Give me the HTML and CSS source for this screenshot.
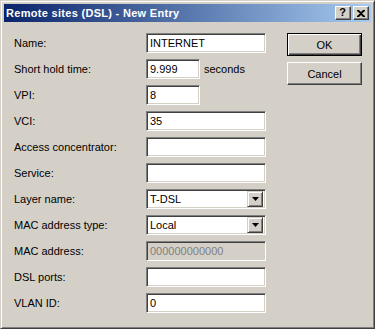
FILE: index.html
```html
<!DOCTYPE html>
<html lang="en">
<head>
  <meta charset="UTF-8">
  <title>Remote sites (DSL) - New Entry</title>
  <link rel="stylesheet" href="styles.css">
</head>
<body>

  <!-- dialog window -->
  <div class="window">
    <div class="titlebar">
      <span class="title">Remote sites (DSL) - New Entry</span>
      <div class="caption-buttons">
        <span class="caption-btn help">?</span>
        <span class="caption-btn close">
          <svg width="8" height="7" viewBox="0 0 8 7"><path d="M0 0h2l2 2 2-2h2v1L5 3.5 8 6v1H6L4 5 2 7H0V6l3-2.5L0 1z" fill="#000"/></svg>
        </span>
      </div>
    </div>

    <div class="content">
      <div class="form">
        <label>Name:</label>
        <div class="field"><input class="edit" type="text" value="INTERNET"></div>

        <label>Short hold time:</label>
        <div class="field"><input class="edit short" type="text" value="9.999"><span class="unit">seconds</span></div>

        <label>VPI:</label>
        <div class="field"><input class="edit short" type="text" value="8"></div>

        <label>VCI:</label>
        <div class="field"><input class="edit" type="text" value="35"></div>

        <label>Access concentrator:</label>
        <div class="field"><input class="edit" type="text" value=""></div>

        <label>Service:</label>
        <div class="field"><input class="edit" type="text" value=""></div>

        <label>Layer name:</label>
        <div class="field">
          <div class="combo"><span class="combo-text">T-DSL</span><span class="drop"><svg width="7" height="4" viewBox="0 0 7 4"><path d="M0 0h7L3.5 4z" fill="#000"/></svg></span></div>
        </div>

        <label>MAC address type:</label>
        <div class="field">
          <div class="combo"><span class="combo-text">Local</span><span class="drop"><svg width="7" height="4" viewBox="0 0 7 4"><path d="M0 0h7L3.5 4z" fill="#000"/></svg></span></div>
        </div>

        <label>MAC address:</label>
        <div class="field"><input class="edit" type="text" value="000000000000" disabled></div>

        <label>DSL ports:</label>
        <div class="field"><input class="edit" type="text" value=""></div>

        <label>VLAN ID:</label>
        <div class="field"><input class="edit" type="text" value="0"></div>
      </div>

      <!-- OK / Cancel -->
      <div class="buttons">
        <button class="btn default" type="submit">OK</button>
        <button class="btn" type="button">Cancel</button>
      </div>
    </div>
  </div>

</body>
</html>
```

FILE: styles.css
```css
body {
  margin: 0;
  padding: 0;
  background-color: #d4d0c8;
  font-family: 'Liberation Sans', Arial, sans-serif;
  font-size: 11px;
  color: #000;
}

.window {
  box-sizing: border-box;
  width: 375px;
  height: 329px;
  background-color: #d4d0c8;
  border: 1px solid;
  border-color: #d4d0c8 #404040 #404040 #d4d0c8;
  box-shadow: inset 1px 1px #fff, inset -1px -1px #808080;
  padding: 3px;
}

/* title bar */
.titlebar {
  height: 18px;
  display: flex;
  align-items: center;
  justify-content: space-between;
  padding: 0 2px;
  background: linear-gradient(to right, #0a246a, #a6caf0);
}

.title {
  color: #fff;
  font-weight: bold;
  font-size: 11px;
  letter-spacing: 0.3px;
}

.caption-buttons {
  display: flex;
  gap: 2px;
}

.caption-btn {
  box-sizing: border-box;
  width: 16px;
  height: 14px;
  display: flex;
  align-items: center;
  justify-content: center;
  background-color: #d4d0c8;
  border: 1px solid;
  border-color: #fff #404040 #404040 #fff;
  box-shadow: inset -1px -1px #808080;
  font-weight: bold;
  font-size: 11px;
  line-height: 1;
}

.caption-btn.help {
  padding-bottom: 1px;
}

.caption-btn.help,
.caption-btn.close {
  padding-right: 1px;
}

/* dialog body */
.content {
  display: flex;
  padding: 11px 9px 0 10px;
}

.form {
  display: grid;
  grid-template-columns: 132px 120px;
  grid-auto-rows: 26px;
}

.form label {
  height: 20px;
  display: flex;
  align-items: center;
}

.field {
  display: flex;
  align-items: center;
  height: 20px;
}

.edit {
  box-sizing: border-box;
  width: 120px;
  height: 20px;
  margin: 0;
  padding: 0 3px;
  border: 1px solid;
  border-color: #808080 #fff #fff #808080;
  box-shadow: inset 1px 1px #404040, inset -1px -1px #d4d0c8;
  background-color: #fff;
  font-family: inherit;
  font-size: 11px;
  color: #000;
  outline: none;
}

.edit.short {
  width: 54px;
}

.edit:disabled {
  background-color: #d4d0c8;
  color: #808080;
}

.unit {
  margin-left: 4px;
}

/* drop-down list */
.combo {
  box-sizing: border-box;
  width: 120px;
  height: 20px;
  display: flex;
  align-items: center;
  border: 1px solid;
  border-color: #808080 #fff #fff #808080;
  box-shadow: inset 1px 1px #404040, inset -1px -1px #d4d0c8;
  background-color: #fff;
  padding: 2px 2px 2px 3px;
}

.combo-text {
  flex: 1;
}

.drop {
  box-sizing: border-box;
  width: 16px;
  height: 16px;
  display: flex;
  align-items: center;
  justify-content: center;
  background-color: #d4d0c8;
  border: 1px solid;
  border-color: #d4d0c8 #404040 #404040 #d4d0c8;
  box-shadow: inset 1px 1px #fff, inset -1px -1px #808080;
}

/* buttons */
.buttons {
  margin-left: auto;
  display: flex;
  flex-direction: column;
  gap: 6px;
}

.btn {
  box-sizing: border-box;
  width: 75px;
  height: 23px;
  margin: 0;
  padding: 0;
  background-color: #d4d0c8;
  border: 1px solid;
  border-color: #fff #404040 #404040 #fff;
  box-shadow: inset -1px -1px #808080;
  font-family: inherit;
  font-size: 11px;
  color: #000;
}

.btn.default {
  border-color: #000;
  box-shadow: inset 1px 1px #fff, inset -1px -1px #404040, inset -2px -2px #808080;
}
```
